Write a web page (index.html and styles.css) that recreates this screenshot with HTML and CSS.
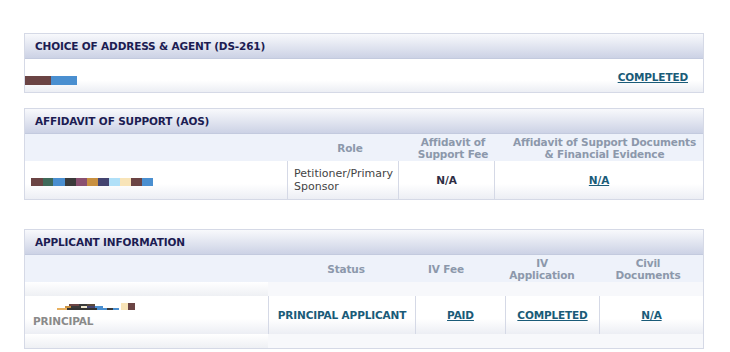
FILE: index.html
```html
<!DOCTYPE html>
<html>
<head>
    <meta charset="UTF-8">
    <title>Case Status</title>
    <link rel="stylesheet" href="styles.css">
</head>
<body>
<div class="page">

    <div class="panel panel-address">
        <div class="panel-head">CHOICE OF ADDRESS &amp; AGENT (DS-261)</div>
        <div class="row row-address">
            <div class="cell cell-name"><span class="redact redact-agent"></span></div>
            <div class="cell cell-end"><a href="#" class="status-link">COMPLETED</a></div>
        </div>
    </div>

    <div class="panel panel-aos">
        <div class="panel-head">AFFIDAVIT OF SUPPORT (AOS)</div>
        <div class="col-head aos-cols-head">
            <div></div>
            <div>Role</div>
            <div>Affidavit of<br>Support Fee</div>
            <div>Affidavit of Support Documents<br>&amp; Financial Evidence</div>
        </div>
        <div class="row data-row aos-cols">
            <div class="cell cell-name"><span class="redact redact-sponsor"></span></div>
            <div class="cell cell-role">Petitioner/Primary<br>Sponsor</div>
            <div class="cell cell-center"><b class="plain-value">N/A</b></div>
            <div class="cell cell-center"><a href="#" class="status-link">N/A</a></div>
        </div>
    </div>

    <div class="panel panel-applicant">
        <div class="panel-head">APPLICANT INFORMATION</div>
        <div class="col-head app-cols-head">
            <div></div>
            <div>Status</div>
            <div>IV Fee</div>
            <div>IV<br>Application</div>
            <div>Civil<br>Documents</div>
        </div>
        <div class="stripe"><div class="stripe-name"></div><div></div></div>
        <div class="row data-row app-cols">
            <div class="cell cell-applicant">
                <span class="redact redact-applicant"></span>
                <span class="applicant-type">PRINCIPAL</span>
            </div>
            <div class="cell cell-center"><b class="applicant-status">PRINCIPAL APPLICANT</b></div>
            <div class="cell cell-center"><a href="#" class="status-link">PAID</a></div>
            <div class="cell cell-center"><a href="#" class="status-link">COMPLETED</a></div>
            <div class="cell cell-center"><a href="#" class="status-link">N/A</a></div>
        </div>
        <div class="stripe"><div class="stripe-name"></div><div></div></div>
    </div>

</div>
</body>
</html>
```

FILE: styles.css
```css
body{margin:0; background:#fff; font-family:"DejaVu Sans", Verdana, sans-serif; font-size:11px; color:#333;}
.page{padding:33px 0 0 24px; width:680px;}
b, .status-link, .panel-head, .col-head, .applicant-type{font-size:10.5px; letter-spacing:-0.15px;}

.panel{border:1px solid #d5d9e6; background:#fff;}
.panel-aos{margin-top:15px;}
.panel-applicant{margin-top:29px;}

.panel-head{
    height:24px; line-height:25px; padding-left:10px;
    border-bottom:1px solid #c3cade;
    background:linear-gradient(#f8f9fc, #ccd2e5);
    color:#1c1c52; font-weight:bold;}

.row{display:grid;}
.row-address{grid-template-columns:1fr auto; height:30px; padding-top:3px; background:linear-gradient(#fff 65%, #eceef4);}
.row-address .cell-end{padding-right:15px;}
.cell{display:flex; align-items:center;}
.cell-center{justify-content:center; border-left:1px solid #d5d9e6;}

.col-head{display:grid; height:27px; padding-top:1px; box-sizing:border-box; background:#eef2fa; color:#8c98ab; font-weight:bold; line-height:12px;}
.col-head div{display:flex; align-items:center; justify-content:center; text-align:center;}
.aos-cols-head{grid-template-columns:275px 100px 106px 197px;}
.app-cols-head{grid-template-columns:266px 110px 90px 102px 110px;}

.data-row{height:38px; background:linear-gradient(#fff 60%, #eceef4);}
.aos-cols{grid-template-columns:262px 111px 96px 209px;}
.app-cols{grid-template-columns:243px 147px 90px 94px 104px;}

.cell-role{border-left:1px solid #d5d9e6; padding-left:6px; line-height:13px; color:#444;}
.plain-value{color:#2e2e44;}
.status-link{color:#1a5b78; font-weight:bold; text-decoration:underline;}
.applicant-status{color:#1a5b78;}

.stripe{display:grid; grid-template-columns:243px 1fr; height:14px; background:#f7f8fb;}
.stripe-name{background:linear-gradient(#fff, #eef0f4);}

.cell-applicant{flex-direction:column; align-items:flex-start; justify-content:center; padding-left:8px;}
.applicant-type{color:#8a8a8a; font-weight:bold; margin-top:5px;}

.redact{display:block;}
.redact-agent{width:52px; height:9px; margin-top:6px;
    background:linear-gradient(90deg, #6b4444 0 26px, #4a8fd0 26px);}
.redact-sponsor{width:122px; height:8px; margin-left:6px; margin-top:4px;
    background:linear-gradient(90deg,
        #6b4444 0 12px, #3f6a5a 12px 22px, #4a8fd0 22px 34px, #3a3a3a 34px 45px,
        #8a5070 45px 56px, #c89040 56px 67px, #444470 67px 78px, #b0e0f8 78px 89px,
        #f8e4b8 89px 100px, #6b4444 100px 111px, #4a8fd0 111px);}
.redact-applicant{width:78px; height:7px; margin-left:24px;
    background:
        linear-gradient(90deg, transparent 0 64px, #f8e4b8 64px 71px, #6b4444 71px),
        linear-gradient(90deg, transparent 0 12px, #6b4444 12px 22px, #3a3a3a 22px 30px, #5a4a3a 30px 38px, transparent 38px) 0 1px / 62px 2px no-repeat,
        linear-gradient(90deg, transparent 0 8px, #c89040 8px 14px, #3a3a3a 14px 24px, #f0e8d0 24px 30px, #444470 30px 38px, #4a8fd0 38px 46px, transparent 46px) 0 3px / 62px 2px no-repeat,
        linear-gradient(90deg, #e8b060 0 10px, #333 10px 40px, #4a8fd0 40px 50px, #3a3a3a 50px 56px, #4a8fd0 56px 62px) 0 5px / 62px 2px no-repeat;}
```
